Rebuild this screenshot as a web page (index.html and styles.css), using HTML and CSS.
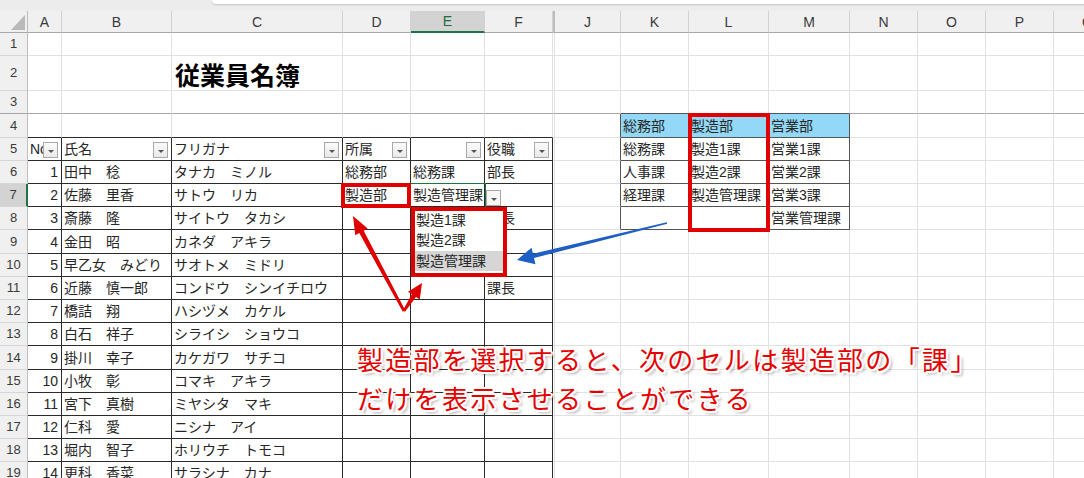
FILE: index.html
```html
<!DOCTYPE html>
<html lang="ja">
<head>
<meta charset="utf-8">
<title>従業員名簿</title>
<link rel="stylesheet" href="styles.css">
</head>
<body>
<div class="topbar"><div class="namebox"></div></div>
<table class="sheet">
<colgroup>
<col class="c-rh"><col class="c-a"><col class="c-b"><col class="c-c"><col class="c-d"><col class="c-e"><col class="c-f"><col class="c-g"><col class="c-j"><col class="c-k"><col class="c-l"><col class="c-m"><col class="c-n"><col class="c-o"><col class="c-p"><col class="c-q">
</colgroup>
<tr class="ch">
<th class="corner"><svg width="28" height="21" viewBox="0 0 28 21"><polygon points="11,19 25,19 25,4" fill="#b9b9b9"/></svg></th>
<th>A</th><th>B</th><th>C</th><th>D</th><th class="sel">E</th><th>F</th><th class="g"></th><th>J</th><th>K</th><th>L</th><th>M</th><th>N</th><th>O</th><th>P</th><th>Q</th>
</tr>
<tr><th class="rh">1</th><td></td><td></td><td></td><td></td><td></td><td></td><td class="g"></td><td></td><td></td><td></td><td></td><td></td><td></td><td></td><td></td></tr>
<tr class="r35"><th class="rh">2</th><td></td><td></td><td class="title">従業員名簿</td><td></td><td></td><td></td><td class="g"></td><td></td><td></td><td></td><td></td><td></td><td></td><td></td><td></td></tr>
<tr class="frz"><th class="rh">3</th><td></td><td></td><td></td><td></td><td></td><td></td><td class="g"></td><td></td><td></td><td></td><td></td><td></td><td></td><td></td><td></td></tr>
<tr class="r24"><th class="rh">4</th><td class="bb"></td><td class="bb"></td><td class="bb"></td><td class="bb"></td><td class="bb"></td><td class="bb"></td><td class="g"></td><td class="rk"></td><td class="k hd">総務部</td><td class="k hd">製造部</td><td class="k hd">営業部</td><td></td><td></td><td></td><td></td></tr>
<tr><th class="rh">5</th>
<td class="b"><div class="hc"><span class="ht">No</span><span class="fb"></span></div></td>
<td class="b"><div class="hc"><span class="ht">氏名</span><span class="fb"></span></div></td>
<td class="b"><div class="hc"><span class="ht">フリガナ</span><span class="fb"></span></div></td>
<td class="b"><div class="hc"><span class="ht">所属</span><span class="fb"></span></div></td>
<td class="b"><div class="hc"><span class="ht"></span><span class="fb"></span></div></td>
<td class="b"><div class="hc"><span class="ht">役職</span><span class="fb"></span></div></td>
<td class="g"></td><td class="rk"></td><td class="k">総務課</td><td class="k">製造1課</td><td class="k">営業1課</td><td></td><td></td><td></td><td></td></tr>
<tr><th class="rh">6</th><td class="b num">1</td><td class="b">田中　稔</td><td class="b">タナカ　ミノル</td><td class="b">総務部</td><td class="b">総務課</td><td class="b">部長</td><td class="g"></td><td class="rk"></td><td class="k">人事課</td><td class="k">製造2課</td><td class="k">営業2課</td><td></td><td></td><td></td><td></td></tr>
<tr><th class="rh sel">7</th><td class="b num">2</td><td class="b">佐藤　里香</td><td class="b">サトウ　リカ</td><td class="b">製造部</td><td class="b">製造管理課</td><td class="b"><div class="ddc"><span class="fb dd"></span></div></td><td class="g"></td><td class="rk"></td><td class="k">経理課</td><td class="k">製造管理課</td><td class="k">営業3課</td><td></td><td></td><td></td><td></td></tr>
<tr><th class="rh">8</th><td class="b num">3</td><td class="b">斎藤　隆</td><td class="b">サイトウ　タカシ</td><td class="b"></td><td class="b"></td><td class="b">部長</td><td class="g"></td><td class="rk"></td><td class="k"></td><td class="k"></td><td class="k">営業管理課</td><td></td><td></td><td></td><td></td></tr>
<tr class="r24"><th class="rh">9</th><td class="b num">4</td><td class="b">金田　昭</td><td class="b">カネダ　アキラ</td><td class="b"></td><td class="b"></td><td class="b"></td><td class="g"></td><td></td><td></td><td></td><td></td><td></td><td></td><td></td><td></td></tr>
<tr><th class="rh">10</th><td class="b num">5</td><td class="b">早乙女　みどり</td><td class="b">サオトメ　ミドリ</td><td class="b"></td><td class="b"></td><td class="b"></td><td class="g"></td><td></td><td></td><td></td><td></td><td></td><td></td><td></td><td></td></tr>
<tr><th class="rh">11</th><td class="b num">6</td><td class="b">近藤　慎一郎</td><td class="b">コンドウ　シンイチロウ</td><td class="b"></td><td class="b"></td><td class="b">課長</td><td class="g"></td><td></td><td></td><td></td><td></td><td></td><td></td><td></td><td></td></tr>
<tr><th class="rh">12</th><td class="b num">7</td><td class="b">橋詰　翔</td><td class="b">ハシヅメ　カケル</td><td class="b"></td><td class="b"></td><td class="b"></td><td class="g"></td><td></td><td></td><td></td><td></td><td></td><td></td><td></td><td></td></tr>
<tr><th class="rh">13</th><td class="b num">8</td><td class="b">白石　祥子</td><td class="b">シライシ　ショウコ</td><td class="b"></td><td class="b"></td><td class="b"></td><td class="g"></td><td></td><td></td><td></td><td></td><td></td><td></td><td></td><td></td></tr>
<tr class="r24"><th class="rh">14</th><td class="b num">9</td><td class="b">掛川　幸子</td><td class="b">カケガワ　サチコ</td><td class="b"></td><td class="b"></td><td class="b"></td><td class="g"></td><td></td><td></td><td></td><td></td><td></td><td></td><td></td><td></td></tr>
<tr><th class="rh">15</th><td class="b num">10</td><td class="b">小牧　彰</td><td class="b">コマキ　アキラ</td><td class="b"></td><td class="b"></td><td class="b"></td><td class="g"></td><td></td><td></td><td></td><td></td><td></td><td></td><td></td><td></td></tr>
<tr><th class="rh">16</th><td class="b num">11</td><td class="b">宮下　真樹</td><td class="b">ミヤシタ　マキ</td><td class="b"></td><td class="b"></td><td class="b"></td><td class="g"></td><td></td><td></td><td></td><td></td><td></td><td></td><td></td><td></td></tr>
<tr><th class="rh">17</th><td class="b num">12</td><td class="b">仁科　愛</td><td class="b">ニシナ　アイ</td><td class="b"></td><td class="b"></td><td class="b"></td><td class="g"></td><td></td><td></td><td></td><td></td><td></td><td></td><td></td><td></td></tr>
<tr><th class="rh">18</th><td class="b num">13</td><td class="b">堀内　智子</td><td class="b">ホリウチ　トモコ</td><td class="b"></td><td class="b"></td><td class="b"></td><td class="g"></td><td></td><td></td><td></td><td></td><td></td><td></td><td></td><td></td></tr>
<tr><th class="rh">19</th><td class="b num">14</td><td class="b">更科　香菜</td><td class="b">サラシナ　カナ</td><td class="b"></td><td class="b"></td><td class="b"></td><td class="g"></td><td></td><td></td><td></td><td></td><td></td><td></td><td></td><td></td></tr>
</table>

<div class="actcell"></div>
<div class="redbox box-d7"></div>
<div class="redbox box-l"></div>
<div class="ddlist">
<div class="ddi">製造1課</div>
<div class="ddi">製造2課</div>
<div class="ddi on">製造管理課</div>
</div>
<svg class="arrows" width="1084" height="478" viewBox="0 0 1084 478">
<polygon fill="#e00000" points="405.2,310.3 363.7,230.7 367.7,228.6 353,216 355.3,235.2 359.3,233.1 402.8,311.7"/>
<polygon fill="#e00000" points="405.0,311.7 416.0,297.0 419.8,299.4 422,283 408.0,291.8 411.8,294.3 403.0,310.3"/>
<polygon fill="#1f5fc4" points="666.8,222.2 533.0,253.8 531.5,247.7 517,260 535.5,264.2 534.0,258.0 667.2,223.8"/>
</svg>
<div class="note">製造部を選択すると、次のセルは製造部の「課」<br>だけを表示させることができる</div>
</body>
</html>
```
FILE: styles.css
```css
html, body {
  margin: 0;
  padding: 0;
}
body {
  width: 1084px;
  height: 478px;
  overflow: hidden;
  position: relative;
  background: #fff;
  font-family: "Liberation Sans", "Noto Sans CJK JP", sans-serif;
}
.topbar {
  height: 11px;
  background: #ececec;
  position: relative;
}
.namebox {
  position: absolute;
  left: 212px;
  right: -10px;
  top: 0;
  height: 4px;
  background: #fff;
  border-bottom-left-radius: 5px;
  box-shadow: 0 1px 2px rgba(0, 0, 0, 0.18);
}

.sheet {
  border-collapse: separate;
  border-spacing: 0;
  table-layout: fixed;
  width: 1122px;
}
.c-rh { width: 28px; }
.c-a { width: 34px; }
.c-b { width: 110px; }
.c-c { width: 171px; }
.c-d { width: 68px; }
.c-e { width: 74px; }
.c-f { width: 68px; }
.c-g { width: 2px; }
.c-j { width: 66px; }
.c-k { width: 68px; }
.c-l { width: 80px; }
.c-m { width: 81px; }
.c-n, .c-o, .c-p, .c-q { width: 68px; }

.sheet tr { height: 23px; }
.sheet tr.r24 { height: 24px; }
.sheet tr.r35 { height: 35px; }
.sheet tr.ch { height: 22px; }

.sheet td, .sheet th {
  padding: 0 2px;
  border-right: 1px solid #e1e1e1;
  border-bottom: 1px solid #e1e1e1;
  white-space: nowrap;
  overflow: visible;
  font-weight: 400;
  font-size: 14px;
  line-height: 16px;
  color: #262626;
  vertical-align: middle;
  text-align: left;
}

/* column header */
.sheet tr.ch th {
  background: #f0f0f0;
  border-right-color: #d2d2d2;
  border-bottom: 1px solid #a8a8a8;
  font-family: "Liberation Sans", sans-serif;
  font-size: 14px;
  color: #3a3a3a;
  text-align: center;
  padding: 0;
}
.sheet tr.ch th.corner {
  border-right-color: #bdbdbd;
  vertical-align: bottom;
  line-height: 0;
}
.sheet tr.ch th.sel {
  background: #d3d3d3;
  color: #1d6b40;
  border-bottom: 2px solid #217346;
}
.sheet tr.ch th.g {
  border-right-color: #bdbdbd;
  border-left: 1px solid #bdbdbd;
}

/* row header */
.sheet th.rh {
  background: #f0f0f0;
  border-right: 1px solid #bdbdbd;
  border-bottom-color: #d6d6d6;
  font-family: "Liberation Sans", sans-serif;
  font-size: 13px;
  color: #3a3a3a;
  text-align: center;
  padding: 0;
}
.sheet th.rh.sel {
  background: #d3d3d3;
  border-right: 2px solid #217346;
}

/* freeze line */
.sheet tr.frz td, .sheet tr.frz th {
  border-bottom-color: #a6a6a6;
}

.sheet td.g { padding: 0; }

/* main table borders */
.sheet td.b {
  border-right-color: #2b2b2b;
  border-bottom-color: #2b2b2b;
}
.sheet td.bb { border-bottom-color: #2b2b2b; }
.sheet td.num {
  text-align: right;
  padding-right: 3px;
  font-family: "Liberation Sans", sans-serif;
}
.sheet td.title {
  font-family: "Noto Sans CJK JP", sans-serif;
  font-weight: 700;
  font-size: 25px;
  line-height: 30px;
  color: #000;
  vertical-align: bottom;
  padding: 0 0 1px 3px;
}

/* lookup table */
.sheet td.rk { border-right-color: #555; }
.sheet td.k {
  border-right-color: #555;
  border-bottom-color: #555;
  padding-left: 2px;
}
.sheet td.hd { background: #93d8f6; }
.sheet tr.frz td:nth-child(10),
.sheet tr.frz td:nth-child(11),
.sheet tr.frz td:nth-child(12) { border-bottom-color: #555; }

/* header cells with filter buttons */
.hc {
  display: flex;
  align-items: center;
  justify-content: space-between;
  overflow: hidden;
  height: 22px;
}
.ht {
  overflow: hidden;
  flex: 1 1 auto;
  min-width: 0;
}
.fb {
  flex: 0 0 auto;
  position: relative;
  width: 13px;
  height: 14px;
  border: 1px solid #a9a9a9;
  background: linear-gradient(#fbfbfb, #e9e9e9);
  margin-right: 1px;
  margin-top: 2px;
}
.fb::after {
  content: "";
  position: absolute;
  left: 4px;
  top: 7px;
  border-left: 3px solid transparent;
  border-right: 3px solid transparent;
  border-top: 3px solid #555;
}
.ddc {
  display: flex;
  align-items: flex-end;
  height: 22px;
  margin-left: -1px;
}
.fb.dd {
  background: #f7f7f7;
  margin-top: 0;
  margin-bottom: 0;
}

/* overlays */
.actcell {
  position: absolute;
  left: 410px;
  top: 183px;
  width: 76px;
  height: 25px;
  box-sizing: border-box;
  border: 1px solid #217346;
}
.redbox {
  position: absolute;
  box-sizing: border-box;
  border: 4px solid #e00000;
}
.box-d7 {
  left: 341px;
  top: 183px;
  width: 70px;
  height: 25px;
}
.box-l {
  left: 688px;
  top: 113px;
  width: 82px;
  height: 119px;
}
.ddlist {
  position: absolute;
  left: 411px;
  top: 207px;
  width: 96px;
  height: 70px;
  box-sizing: border-box;
  border: 4px solid #e00000;
  background: #fff;
  font-family: "Liberation Sans", "Noto Sans CJK JP", sans-serif;
  font-size: 14px;
  color: #262626;
}
.ddi {
  height: 20px;
  line-height: 18px;
  padding-left: 1px;
  white-space: nowrap;
}
.ddi.on { background: #d6d6d6; line-height: 20px; }

.arrows {
  position: absolute;
  left: 0;
  top: 0;
  pointer-events: none;
}
.note {
  position: absolute;
  left: 357px;
  top: 339px;
  font-family: "Noto Sans CJK JP", sans-serif;
  font-size: 26px;
  letter-spacing: 2.3px;
  line-height: 39px;
  color: #e50000;
  white-space: nowrap;
  text-shadow:
    2px 0 0 #fff, -2px 0 0 #fff, 0 2px 0 #fff, 0 -2px 0 #fff,
    1.5px 1.5px 0 #fff, -1.5px -1.5px 0 #fff, 1.5px -1.5px 0 #fff, -1.5px 1.5px 0 #fff,
    3px 3px 3px rgba(0, 0, 0, 0.35);
}
```
